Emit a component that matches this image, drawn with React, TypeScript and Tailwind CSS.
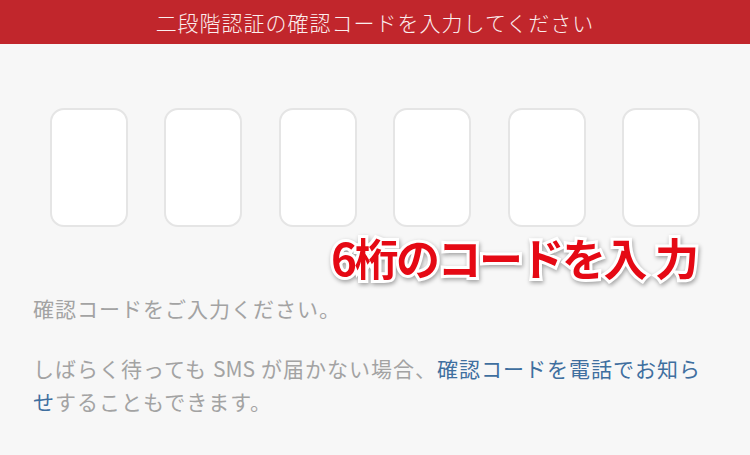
import React from "react"

const font = "font-['Noto_Sans_CJK_JP','Noto_Sans',sans-serif]"

export default function App() {
  const boxes = [0, 1, 2, 3, 4, 5]

  return (
    <div className={`relative w-[750px] h-[455px] overflow-hidden bg-[#f7f7f7] ${font}`}>
      {/* header */}
      <div className="h-[44px] bg-[#c1262c] flex items-center justify-center">
        <h1 className="text-[21px] leading-none font-light tracking-[1px] text-[#fbeeee]">
          二段階認証の確認コードを入力してください
        </h1>
      </div>

      {/* code inputs */}
      <div className="pt-[64px] px-[50px] flex justify-between">
        {boxes.map((i) => (
          <div
            key={i}
            className="w-[78px] h-[119px] bg-white border-2 border-[#e5e5e5] rounded-[14px]"
          />
        ))}
      </div>

      {/* description */}
      <div className="pt-[65px] pl-[33px] text-[21px] leading-[33px] tracking-[1px] text-[#a3a3a3]">
        <p className="mb-[27px]">確認コードをご入力ください。</p>
        <p>
          しばらく待っても<span className="mx-[6px] tracking-normal">SMS</span>が届かない場合、
          <span className="text-[#3f6f9f]">確認コードを電話でお知ら</span>
          <br />
          <span className="text-[#3f6f9f]">せ</span>することもできます。
        </p>
      </div>

      {/* annotation */}
      <div className="absolute left-[331px] top-[235px] text-[44px] leading-none font-bold tracking-[-2.5px] text-[#e50914] [-webkit-text-stroke:6px_white] [paint-order:stroke_fill] [filter:drop-shadow(1px_2px_2px_rgba(0,0,0,0.35))]">
        6桁のコードを入<span className="ml-[10px]">力</span>
      </div>
    </div>
  )
}
